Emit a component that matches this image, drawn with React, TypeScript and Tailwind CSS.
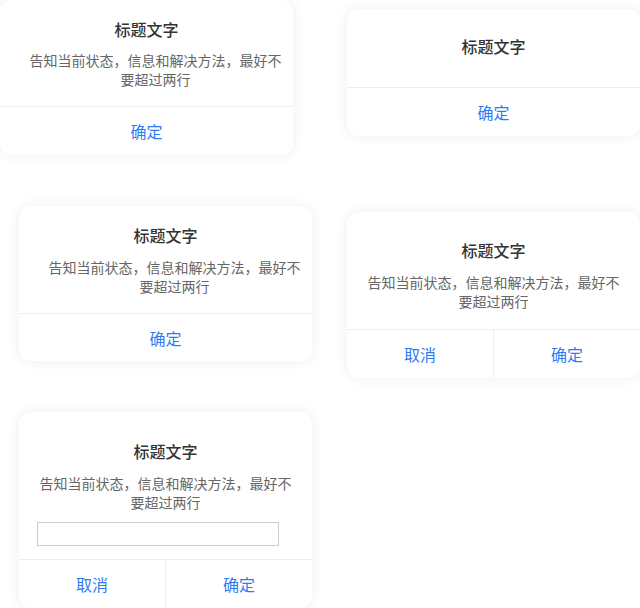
import React from "react";

const font = { fontFamily: '"Noto Sans CJK SC", "Noto Sans", sans-serif' };

const Title: React.FC = () => (
  <div className="text-[16px] leading-[22px] font-medium text-[#333]">标题文字</div>
);

const Desc: React.FC<{ className?: string }> = ({ className = "" }) => (
  <p className={"text-[14px] leading-[19px] text-[#666] " + className}>
    告知当前状态，信息和解决方法，最好不要超过两行
  </p>
);

const Actions: React.FC<{ cancel?: boolean }> = ({ cancel }) => (
  <div className="flex border-t border-[#eee] h-[49px]">
    {cancel && (
      <button className="flex-1 text-[16px] text-[#2f7bf5] border-r border-[#eee]">取消</button>
    )}
    <button className="flex-1 text-[16px] text-[#2f7bf5]">确定</button>
  </div>
);

const Card: React.FC<{ className?: string; children: React.ReactNode }> = ({ className = "", children }) => (
  <div className={"w-[293px] bg-white rounded-[12px] shadow-[0_0_14px_rgba(0,0,0,0.07)] overflow-hidden text-center " + className}>
    {children}
  </div>
);

export default function App() {
  return (
    <div className="w-[640px] h-[608px] bg-white overflow-hidden flex" style={font}>
      {/* colonne gauche */}
      <div className="flex flex-col w-[347px] shrink-0">
        <Card>
          <div className="pt-[18px] pb-[17px]">
            <Title />
            <Desc className="mt-[11px] pl-[28px] pr-[10px]" />
          </div>
          <Actions />
        </Card>
        <Card className="mt-[51px] ml-[19px]">
          <div className="pt-[18px] pb-[17px]">
            <Title />
            <Desc className="mt-[12px] pl-[28px] pr-[10px]" />
          </div>
          <Actions />
        </Card>
        <Card className="mt-[51px] ml-[19px]">
          <div className="pt-[28px] pb-[13px]">
            <Title />
            <Desc className="mt-[12px] px-[18px]" />
            <input className="block mt-[10px] ml-[18px] w-[242px] h-[24px] border border-[#ccc] outline-none" />
          </div>
          <Actions cancel />
        </Card>
      </div>
      {/* colonne droite */}
      <div className="flex flex-col">
        <Card className="mt-[9px]">
          <div className="pt-[26px] pb-[30px]">
            <Title />
          </div>
          <Actions />
        </Card>
        <Card className="mt-[76px]">
          <div className="pt-[27px] pb-[18px]">
            <Title />
            <Desc className="mt-[12px] px-[18px]" />
          </div>
          <Actions cancel />
        </Card>
      </div>
    </div>
  );
}
